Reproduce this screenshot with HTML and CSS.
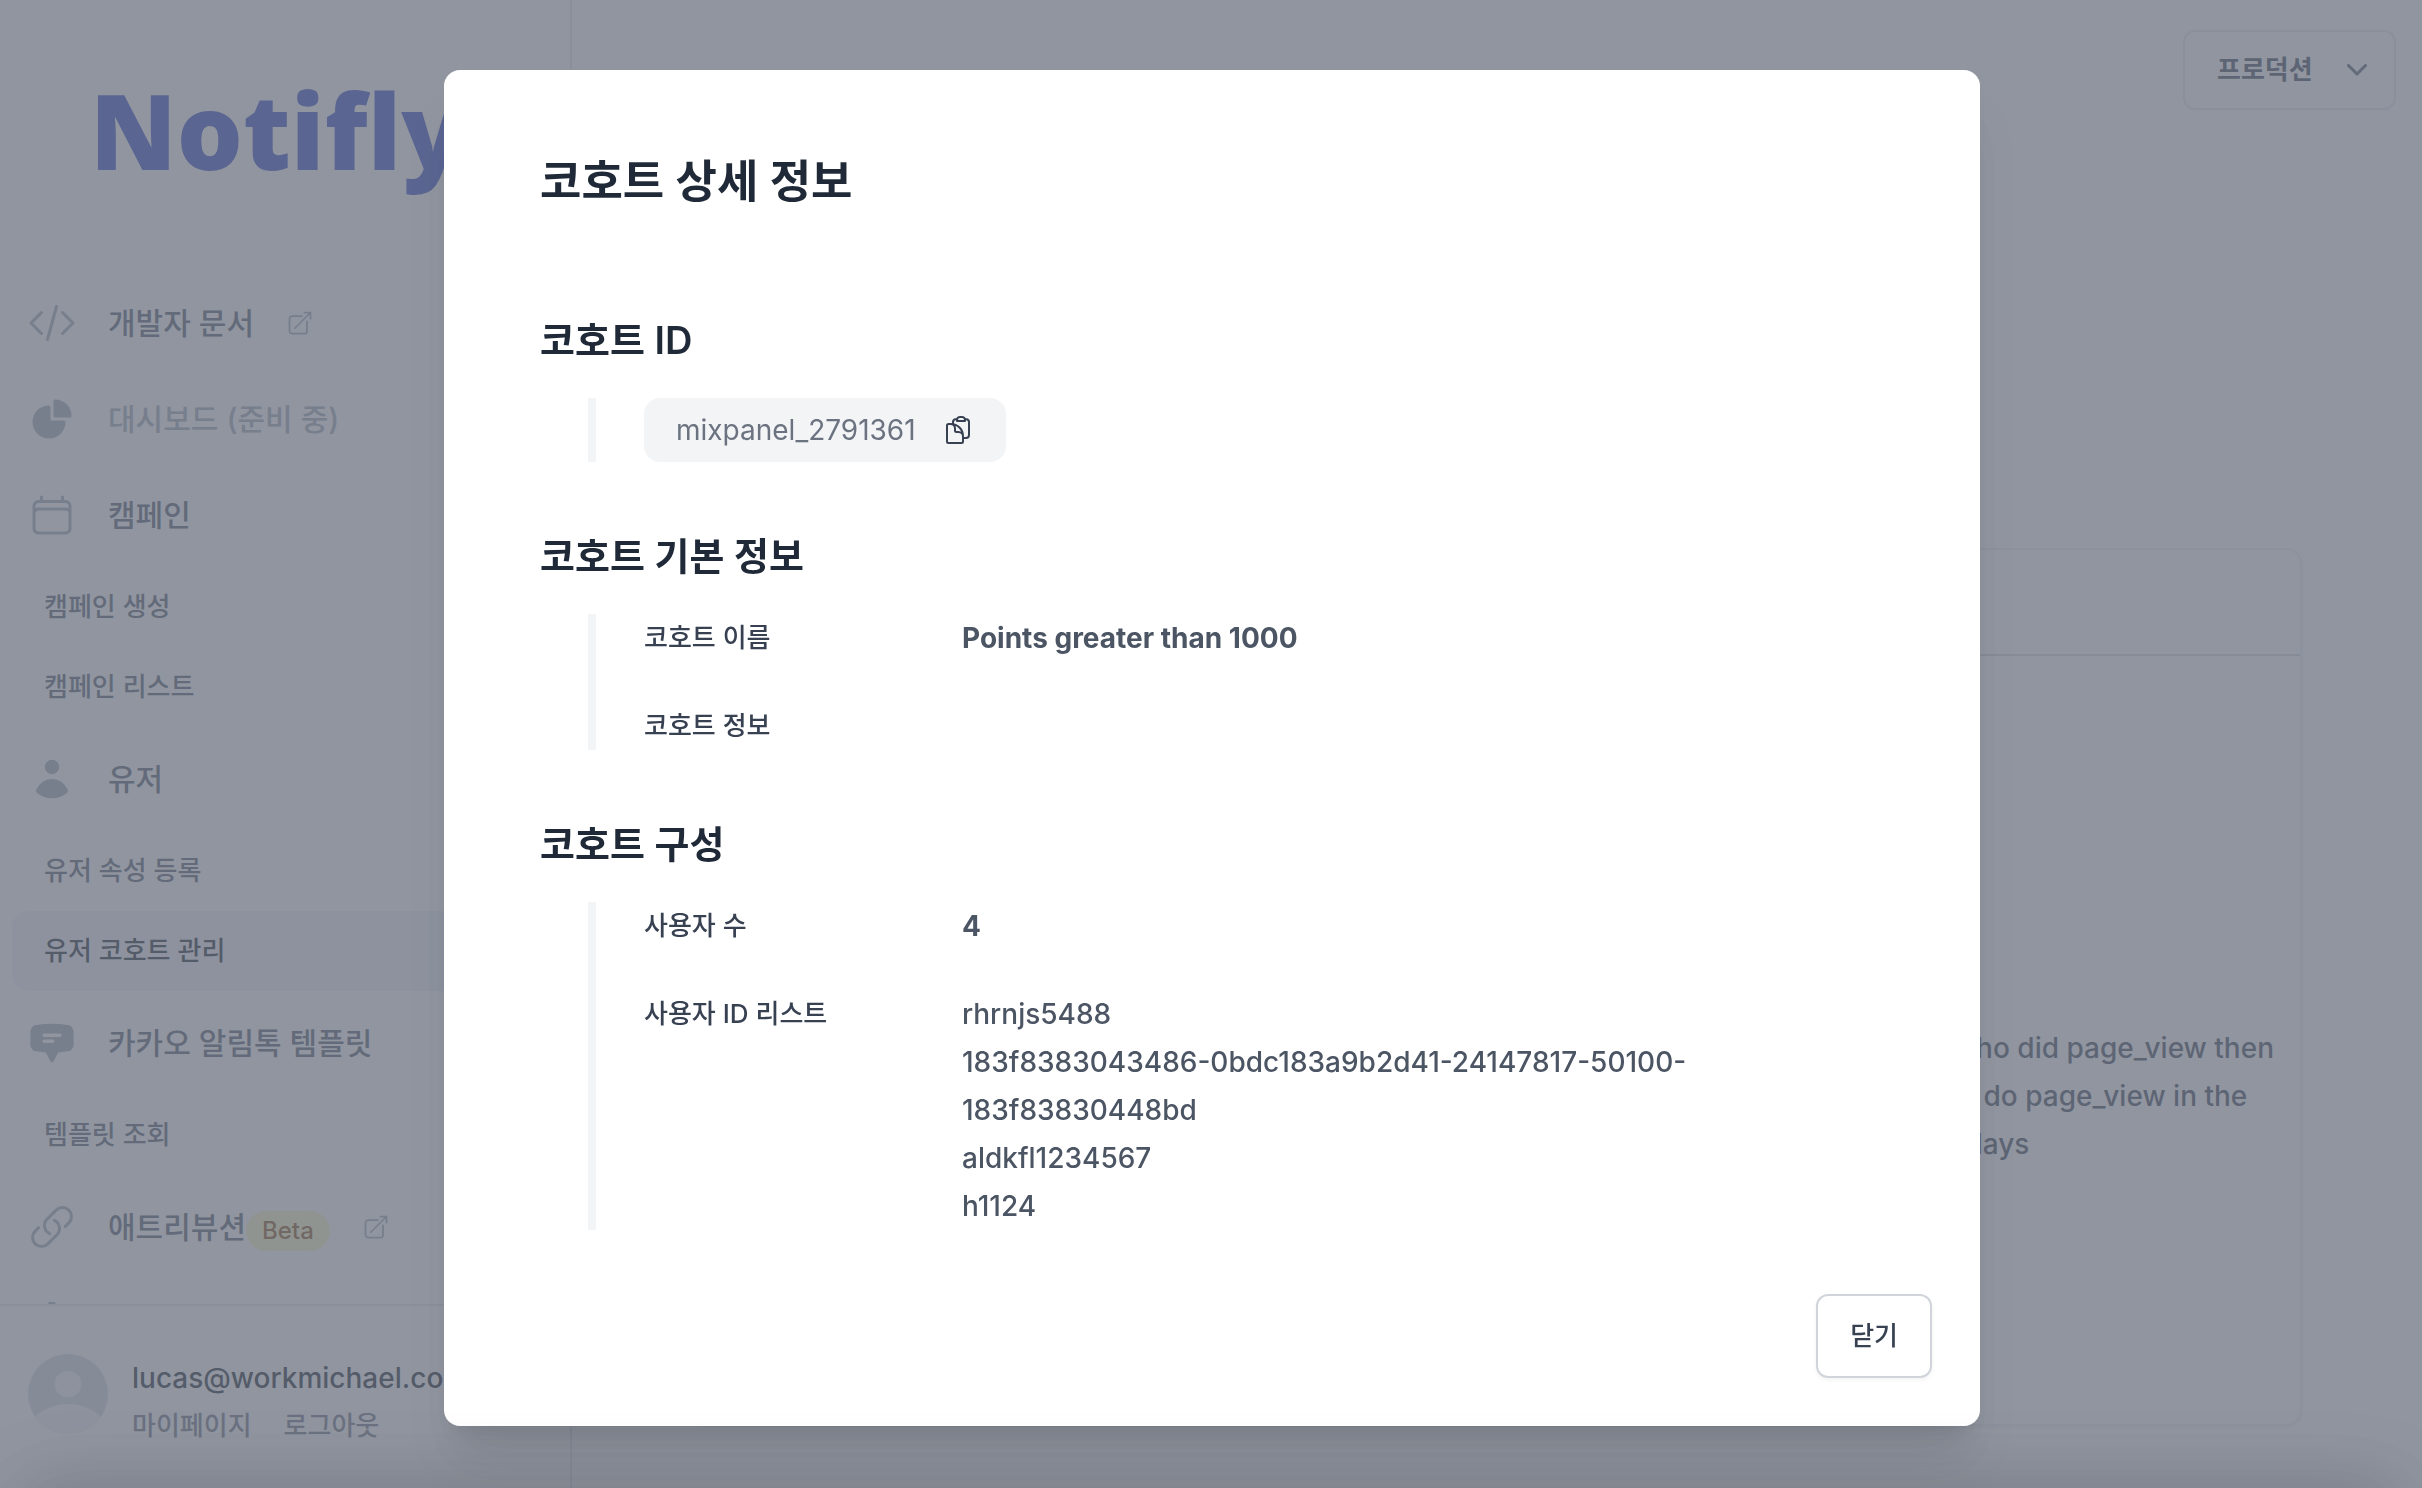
FILE: index.html
```html
<!DOCTYPE html>
<html lang="ko">
<head>
<meta charset="utf-8">
<title>Notifly</title>
<link rel="stylesheet" href="styles.css">
</head>
<body>
<div class="app">
  <aside class="sidebar">
    <div class="sidebar-scroll">
      <a class="logo" href="#">Notifly</a>
      <nav class="nav">
        <a class="nav-item" href="#">
          <svg class="icon line" viewBox="0 0 24 24"><path d="M17.25 6.75L22.5 12l-5.25 5.25m-10.5 0L1.5 12l5.25-5.25m7.5-3l-4.5 16.5"/></svg>
          <span>개발자 문서</span>
          <svg class="icon-external line" viewBox="0 0 24 24"><path d="M13.5 6H5.25A2.25 2.25 0 003 8.25v10.5A2.25 2.25 0 005.25 21h10.5A2.25 2.25 0 0018 18.75V10.5m-10.5 6L21 3m0 0h-5.25M21 3v5.25"/></svg>
        </a>
        <a class="nav-item disabled" href="#">
          <svg class="icon solid" viewBox="0 0 24 24"><path d="M2.25 13.5a8.25 8.25 0 018.25-8.25.75.75 0 01.75.75v6.75H18a.75.75 0 01.75.75 8.25 8.25 0 01-16.5 0z"/><path d="M12.75 3a.75.75 0 01.75-.75 8.25 8.25 0 018.25 8.25.75.75 0 01-.75.75h-7.5a.75.75 0 01-.75-.75V3z"/></svg>
          <span>대시보드 (준비 중)</span>
        </a>
        <div class="nav-group">
          <a class="nav-item" href="#">
            <svg class="icon line" viewBox="0 0 24 24"><path d="M6.75 3v2.25M17.25 3v2.25M3 18.75V7.5a2.25 2.25 0 012.25-2.25h13.5A2.25 2.25 0 0121 7.5v11.25m-18 0A2.25 2.25 0 005.25 21h13.5A2.25 2.25 0 0021 18.75m-18 0v-7.5A2.25 2.25 0 015.25 9h13.5A2.25 2.25 0 0121 11.25v7.5"/></svg>
            <span>캠페인</span>
          </a>
          <a class="nav-sub" href="#">캠페인 생성</a>
          <a class="nav-sub" href="#">캠페인 리스트</a>
        </div>
        <div class="nav-group">
          <a class="nav-item" href="#">
            <svg class="icon solid" viewBox="0 0 20 20"><path d="M10 8a3 3 0 100-6 3 3 0 000 6zM3.465 14.493a1.23 1.23 0 00.41 1.412A9.957 9.957 0 0010 18c2.31 0 4.438-.784 6.131-2.1.43-.333.604-.903.408-1.41a7.002 7.002 0 00-13.074.003z"/></svg>
            <span>유저</span>
          </a>
          <a class="nav-sub" href="#">유저 속성 등록</a>
          <a class="nav-sub active" href="#">유저 코호트 관리</a>
        </div>
        <div class="nav-group">
          <a class="nav-item" href="#">
            <svg class="icon solid" viewBox="0 0 20 20"><path fill-rule="evenodd" d="M3.43 2.524A41.29 41.29 0 0110 2c2.236 0 4.43.18 6.57.524 1.437.231 2.43 1.49 2.43 2.902v5.148c0 1.413-.993 2.67-2.43 2.902a41.202 41.202 0 01-3.55.414c-.28.02-.521.18-.643.413l-1.712 3.293a.75.75 0 01-1.33 0l-1.713-3.293a.783.783 0 00-.642-.413 41.108 41.108 0 01-3.55-.414C1.993 13.245 1 11.986 1 10.574V5.426c0-1.413.993-2.67 2.43-2.902zM6.75 6a.75.75 0 000 1.5h6.5a.75.75 0 000-1.5h-6.5zm0 2.5a.75.75 0 000 1.5h3.5a.75.75 0 000-1.5h-3.5z"/></svg>
            <span>카카오 알림톡 템플릿</span>
          </a>
          <a class="nav-sub" href="#">템플릿 조회</a>
        </div>
        <a class="nav-item" href="#">
          <svg class="icon line" viewBox="0 0 24 24"><path d="M13.19 8.688a4.5 4.5 0 011.242 7.244l-4.5 4.5a4.5 4.5 0 01-6.364-6.364l1.757-1.757m13.35-.622l1.757-1.757a4.5 4.5 0 00-6.364-6.364l-4.5 4.5a4.5 4.5 0 001.242 7.244"/></svg>
          <span>애트리뷰션</span>
          <span class="badge">Beta</span>
          <svg class="icon-external line" viewBox="0 0 24 24"><path d="M13.5 6H5.25A2.25 2.25 0 003 8.25v10.5A2.25 2.25 0 005.25 21h10.5A2.25 2.25 0 0018 18.75V10.5m-10.5 6L21 3m0 0h-5.25M21 3v5.25"/></svg>
        </a>
        <a class="nav-item" href="#" aria-label="설정">
          <svg class="icon solid" viewBox="0 0 24 24"><path d="M10.5 1.5h3l.8 3 2.7 1.1 2.7-1.5 2.1 2.1-1.5 2.7 1.1 2.7v3l-2.7.9-1.4 3-3 .5-.8 3h-3l-.8-3-2.7-1.1-2.7 1.5-2.1-2.1 1.5-2.7L2 13.5v-3l3-.8 1.1-2.7-1.5-2.7 2.1-2.1 2.7 1.5z"/></svg>
        </a>
      </nav>
    </div>
    <div class="profile">
      <svg class="avatar" viewBox="0 0 24 24"><path d="M24 20.993V24H0v-2.996A14.977 14.977 0 0112.004 15c4.904 0 9.26 2.354 11.996 5.993zM16.002 8.999a4 4 0 11-8 0 4 4 0 018 0z"/></svg>
      <div class="profile-text">
        <div class="email">lucas@workmichael.com</div>
        <div class="profile-links"><a href="#">마이페이지</a><a href="#">로그아웃</a></div>
      </div>
    </div>
  </aside>
  <main class="main">
    <header class="topbar">
      <div class="env">
        <select class="env-select" aria-label="환경"><option>프로덕션</option></select>
        <svg class="env-chevron line" viewBox="0 0 20 12"><path d="M1.500 1.500L10 10l8.500-8.500"/></svg>
      </div>
    </header>
    <section class="card">
      <div class="card-head"></div>
      <div class="card-body">
        <p class="card-text">Users who did page_view then<br>did then do page_view in the<br>last 30 days</p>
      </div>
    </section>
  </main>
</div>

<div class="overlay">
  <section class="modal" role="dialog" aria-modal="true" aria-labelledby="modal-title">
    <h1 class="modal-title" id="modal-title">코호트 상세 정보</h1>
    <div class="sections">
      <section class="block">
        <h2 class="block-title">코호트 ID</h2>
        <div class="block-body">
          <div class="id-pill">
            <span>mixpanel_2791361</span>
            <button class="copy" type="button" aria-label="복사">
              <svg class="line" viewBox="0 0 24 24"><path d="M8.25 7.5V6.108c0-1.135.845-2.098 1.976-2.192.373-.03.748-.057 1.123-.08M15.75 18H18a2.25 2.25 0 002.25-2.25V6.108c0-1.135-.845-2.098-1.976-2.192a48.424 48.424 0 00-1.123-.08M15.75 18.75v-1.875a3.375 3.375 0 00-3.375-3.375h-1.5a1.125 1.125 0 01-1.125-1.125v-1.5A3.375 3.375 0 006.375 7.5H5.25m11.9-3.664A2.251 2.251 0 0015 2.25h-1.5a2.251 2.251 0 00-2.15 1.586m5.8 0c.065.21.1.433.1.664v.75h-6V4.5c0-.231.035-.454.1-.664M6.75 7.5H4.875c-.621 0-1.125.504-1.125 1.125v12c0 .621.504 1.125 1.125 1.125h9.75c.621 0 1.125-.504 1.125-1.125V16.5a9 9 0 00-9-9z"/></svg>
            </button>
          </div>
        </div>
      </section>
      <section class="block">
        <h2 class="block-title">코호트 기본 정보</h2>
        <dl class="block-body">
          <div class="row"><dt>코호트 이름</dt><dd class="strong">Points greater than 1000</dd></div>
          <div class="row"><dt>코호트 정보</dt><dd></dd></div>
        </dl>
      </section>
      <section class="block">
        <h2 class="block-title">코호트 구성</h2>
        <dl class="block-body">
          <div class="row"><dt>사용자 수</dt><dd class="strong">4</dd></div>
          <div class="row"><dt>사용자 ID 리스트</dt>
            <dd>
              <div>rhrnjs5488</div>
              <div>183f8383043486-0bdc183a9b2d41-24147817-50100-183f83830448bd</div>
              <div>aldkfl1234567</div>
              <div>h1124</div>
            </dd>
          </div>
        </dl>
      </section>
    </div>
    <div class="modal-foot"><button class="close" type="button">닫기</button></div>
  </section>
</div>
</body>
</html>
```
FILE: styles.css
```css
* { box-sizing: border-box; }
body, h1, h2, p, dl, dd { margin: 0; }
body {
  font-family: Inter, "Noto Sans CJK KR", sans-serif;
  font-size: 28px;
  line-height: 48px;
  color: #4b5563;
  background: #fff;
  overflow: hidden;
}
a { color: inherit; text-decoration: none; }
.line { fill: none; stroke: currentColor; stroke-width: 1.5; stroke-linecap: round; stroke-linejoin: round; }
.solid { fill: currentColor; }

.app { display: flex; height: 100vh; }
.sidebar {
  flex: none;
  width: 572px;
  display: flex;
  flex-direction: column;
  border-right: 2px solid #e5e7eb;
}
.sidebar-scroll { flex: 1; min-height: 0; overflow: hidden; }
.logo {
  display: block;
  height: 283px;
  padding: 70px 0 0 90px;
  font-family: "Open Sans", sans-serif;
  font-size: 104px;
  font-weight: 800;
  line-height: 120px;
  color: #2842c4;
}
.nav { padding: 0 12px; font-weight: 500; }
.nav > * + * { margin-top: 16px; }
.nav > .nav-group + * { margin-top: 12px; }
.nav-item { display: flex; align-items: center; height: 80px; padding: 0 16px; font-size: 30px; }
.nav-item.disabled { color: #9ca3af; }
.icon { width: 48px; height: 48px; margin-right: 32px; color: #9ca3af; }
.icon-external { width: 28px; height: 28px; margin-left: 32px; color: #9ca3af; }
.badge {
  height: 40px;
  margin-top: 8px;
  padding: 0 16px;
  border-radius: 20px;
  font-size: 24px;
  line-height: 40px;
  color: #854d0e;
  background: #fef9c3;
}
.nav-sub { display: block; padding: 16px 32px; border-radius: 16px; font-size: 26px; }
.nav-item + .nav-sub { margin-top: 12px; }
.nav-sub.active { color: #111827; background: #f3f4f6; }
.profile { display: flex; gap: 24px; padding: 48px 28px 38px; border-top: 2px solid #e5e7eb; }
.avatar { flex: none; width: 80px; height: 80px; border-radius: 50%; background: #d1d5db; fill: #f3f4f6; }
.email { font-weight: 500; color: #111827; }
.profile-links { display: flex; gap: 32px; font-size: 26px; font-weight: 500; color: #6b7280; }

.main { flex: 1; min-width: 0; display: flex; flex-direction: column; padding: 30px 26px 62px 120px; }
.topbar { display: flex; justify-content: flex-end; }
.env { position: relative; color: #374151; }
.env-select {
  appearance: none;
  display: block;
  width: 213px;
  height: 80px;
  padding: 0 32px;
  border: 2px solid #e5e7eb;
  border-radius: 12px;
  font: 600 26px/48px Inter, "Noto Sans CJK KR", sans-serif;
  color: inherit;
  background: #fff;
}
.env-chevron { position: absolute; right: 29px; top: 34px; width: 20px; height: 12px; stroke-width: 3; color: #4b5563; }
.card {
  flex: 1;
  margin: 438px 94px 0 0;
  border: 2px solid #eceef1;
  border-radius: 16px;
  box-shadow: 0 2px 4px rgba(0, 0, 0, .06);
}
.card-head { height: 106px; border-bottom: 2px solid #d1d5db; }
.card-body { display: flex; justify-content: flex-end; padding: 368px 26px 0; }
.card-text { font-weight: 500; color: #374151; }

.overlay {
  position: fixed;
  inset: 0;
  display: flex;
  justify-content: center;
  align-items: flex-start;
  padding: 70px 0 0 2px;
  background: rgba(107, 114, 128, .75);
  overflow: hidden;
}
.overlay::after {
  content: "";
  position: absolute;
  left: 20px;
  right: 20px;
  top: 100%;
  height: 80px;
  border-radius: 16px;
  box-shadow: 0 0 80px rgba(0, 0, 0, .2);
}
.modal {
  width: 1536px;
  max-width: 94%;
  padding: 80px 48px 48px 96px;
  border-radius: 16px;
  background: #fff;
  box-shadow: 0 40px 50px -10px rgba(0, 0, 0, .1), 0 16px 20px -12px rgba(0, 0, 0, .1);
}
.modal-title { margin-bottom: 96px; font-size: 45px; line-height: 64px; font-weight: 600; color: #1f2937; }
.sections { display: flex; flex-direction: column; gap: 64px; padding-right: 48px; }
.block-title { margin-bottom: 28px; font-size: 38px; line-height: 60px; font-weight: 600; color: #1f2937; }
.block-body {
  display: flex;
  flex-direction: column;
  align-items: flex-start;
  gap: 40px;
  margin-left: 48px;
  padding-left: 48px;
  border-left: 8px solid #f3f4f6;
}
.id-pill {
  display: flex;
  align-items: center;
  gap: 26px;
  height: 64px;
  padding: 0 32px;
  border-radius: 16px;
  color: #6b7280;
  background: #f3f4f6;
}
.copy { width: 32px; height: 32px; padding: 0; border: 0; color: #374151; background: none; }
.copy svg { display: block; }
.row { display: grid; grid-template-columns: repeat(4, 1fr); gap: 32px; width: 100%; }
.row dt { font-size: 26px; font-weight: 500; color: #374151; }
.row dd { grid-column: span 3; min-height: 48px; font-weight: 500; }
.row .strong { font-weight: 700; }
.modal-foot { display: flex; justify-content: flex-end; margin-top: 64px; }
.close {
  height: 84px;
  padding: 0 32px;
  border: 2px solid #d1d5db;
  border-radius: 12px;
  font: 500 26px/48px Inter, "Noto Sans CJK KR", sans-serif;
  color: #374151;
  background: #fff;
  box-shadow: 0 2px 4px rgba(0, 0, 0, .05);
}
```
